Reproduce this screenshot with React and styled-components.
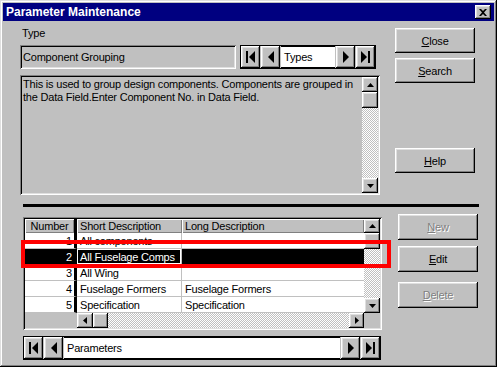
import React from 'react';
import styled, { createGlobalStyle, css } from 'styled-components';

const GlobalStyle = createGlobalStyle`
  html, body {
    margin: 0;
    padding: 0;
    background: #c0c0c0;
  }
  body {
    font-family: "Liberation Sans", Arial, sans-serif;
    font-size: 11px;
    letter-spacing: -0.2px;
    color: #000;
  }
  * {
    box-sizing: border-box;
  }
`;

const raised = css`
  box-shadow: inset -1px -1px #000, inset 1px 1px #fff, inset -2px -2px #808080,
    inset 2px 2px #dfdfdf;
`;

const sunken = css`
  box-shadow: inset 1px 1px #808080, inset -1px -1px #fff, inset 2px 2px #000,
    inset -2px -2px #dfdfdf;
`;

const dither = css`
  background-color: #c0c0c0;
  background-image: conic-gradient(#fff 25%, transparent 0 50%, #fff 0 75%, transparent 0);
  background-size: 2px 2px;
`;

const Window = styled.div`
  width: 497px;
  height: 367px;
  background: #c0c0c0;
  padding: 3px;
  display: flex;
  flex-direction: column;
  box-shadow: inset -1px -1px #000, inset 1px 1px #dfdfdf, inset -2px -2px #808080,
    inset 2px 2px #fff;
`;

const TitleBar = styled.div`
  height: 18px;
  background: #000080;
  color: #fff;
  font-weight: bold;
  font-size: 12px;
  letter-spacing: 0;
  display: flex;
  align-items: center;
  justify-content: space-between;
  padding: 0 3px 0 3px;
`;

const TitleClose = styled.div`
  width: 16px;
  height: 14px;
  background: #c0c0c0;
  ${raised};
  display: flex;
  align-items: center;
  justify-content: center;
`;

const TopSection = styled.div`
  display: flex;
  gap: 15px;
  padding-left: 17px;
`;

const LeftCol = styled.div`
  width: 360px;
  display: flex;
  flex-direction: column;
  padding-top: 6px;
`;

const Label = styled.div`
  line-height: 13px;
  height: 13px;
  padding-left: 2px;
  margin-bottom: 5px;
`;

const FieldRow = styled.div`
  display: flex;
  gap: 4px;
  height: 24px;
`;

const TypeField = styled.div`
  width: 216px;
  ${sunken};
  display: flex;
  align-items: center;
  padding: 0 3px;
`;

const NavGroup = styled.div`
  width: ${p => p.$w}px;
  height: 24px;
  display: flex;
  gap: 1px;
  padding: 1px;
  background: #c0c0c0;
  box-shadow: inset 1px 1px #000, inset -1px -1px #000;
`;

const NavButton = styled.div`
  width: 19px;
  background: #c0c0c0;
  ${raised};
  display: flex;
  align-items: center;
  justify-content: center;
`;

const NavField = styled.div`
  flex: 1;
  background: #fff;
  display: flex;
  align-items: center;
  padding: 0 3px;
  box-shadow: inset 0 1px #000, inset 0 -1px #000;
`;

const MemoBox = styled.div`
  margin-top: 6px;
  height: 120px;
  ${sunken};
  padding: 2px;
  display: flex;
`;

const MemoText = styled.div`
  flex: 1;
  padding: 1px 1px;
  line-height: 13px;
  white-space: nowrap;
  overflow: hidden;
`;

const VScroll = styled.div`
  width: 16px;
  display: flex;
  flex-direction: column;
`;

const ScrollBtn = styled.div`
  height: ${p => p.$h || 15}px;
  width: ${p => p.$w || 16}px;
  flex-shrink: 0;
  background: #c0c0c0;
  ${raised};
  display: flex;
  align-items: center;
  justify-content: center;
`;

const Track = styled.div`
  flex: 1;
  ${dither};
`;

const RightCol = styled.div`
  width: 80px;
  display: flex;
  flex-direction: column;
  padding-top: ${p => p.$top}px;
`;

const Button = styled.div`
  height: ${p => p.$h || 25}px;
  margin-top: ${p => p.$gap || 0}px;
  background: #c0c0c0;
  ${raised};
  display: flex;
  align-items: center;
  justify-content: center;
  color: ${p => (p.$disabled ? '#808080' : '#000')};
  text-shadow: ${p => (p.$disabled ? '1px 1px #fff' : 'none')};
  u {
    text-decoration: underline;
  }
`;

const Separator = styled.div`
  height: 3px;
  background: #000;
  margin: 9px 15px 0 20px;
`;

const BottomSection = styled.div`
  position: relative;
  display: flex;
  gap: 16px;
  margin-top: 7px;
  padding-left: 20px;
`;

const BottomLeft = styled.div`
  width: 359px;
  padding-top: 3px;
  display: flex;
  flex-direction: column;
`;

const Grid = styled.div`
  height: 113px;
  ${sunken};
  padding: 2px;
  display: flex;
  flex-direction: column;
`;

const GridMain = styled.div`
  display: flex;
  height: 94px;
`;

const DataArea = styled.div`
  flex: 1;
  display: flex;
  flex-direction: column;
  background: #fff;
`;

const HeaderRow = styled.div`
  height: 14px;
  display: flex;
  background: #c0c0c0;
`;

const HeaderCell = styled.div`
  width: ${p => (p.$w ? `${p.$w}px` : 'auto')};
  flex: ${p => (p.$w ? 'none' : 1)};
  display: flex;
  align-items: center;
  justify-content: ${p => (p.$center ? 'center' : 'flex-start')};
  padding-left: ${p => (p.$center ? 0 : 3)}px;
  box-shadow: inset 1px 1px #fff, inset -1px -1px #808080;
`;

const FrozenBar = styled.div`
  width: 3px;
  background: #000;
`;

const DataRow = styled.div`
  height: 16px;
  display: flex;
  background: ${p => (p.$selected ? '#000' : '#fff')};
  color: ${p => (p.$selected ? '#fff' : '#000')};
`;

const Cell = styled.div`
  width: ${p => (p.$w ? `${p.$w}px` : 'auto')};
  flex: ${p => (p.$w ? 'none' : 1)};
  display: flex;
  align-items: center;
  justify-content: ${p => (p.$right ? 'flex-end' : 'flex-start')};
  padding: ${p => (p.$right ? '0 2px 0 0' : '0 0 0 3px')};
  border-bottom: 1px solid #c0c0c0;
  border-right: ${p => p.$divider || 'none'};
  box-shadow: ${p => (p.$focus ? 'inset 0 0 0 1px #fff' : 'none')};
  white-space: nowrap;
  overflow: hidden;
`;

const GridFooter = styled.div`
  height: 15px;
  display: flex;
  background: #c0c0c0;
`;

const FrozenGap = styled.div`
  width: 52px;
`;

const HScroll = styled.div`
  flex: 1;
  display: flex;
`;

const Corner = styled.div`
  width: 16px;
`;

const BottomNav = styled(NavGroup)`
  margin-top: 6px;
`;

const Highlight = styled.div`
  position: absolute;
  left: 18px;
  top: 26px;
  width: 370px;
  height: 28px;
  border: 4px solid #ff0000;
  pointer-events: none;
`;

const Glyph = ({ type }) => {
  if (type === 'first')
    return (
      <svg width="9" height="12" viewBox="0 0 9 12">
        <rect x="0" y="0" width="2" height="12" fill="#000" />
        <polygon points="9,0 3,6 9,12" fill="#000" />
      </svg>
    );
  if (type === 'prev')
    return (
      <svg width="6" height="12" viewBox="0 0 6 12">
        <polygon points="6,0 0,6 6,12" fill="#000" />
      </svg>
    );
  if (type === 'next')
    return (
      <svg width="6" height="12" viewBox="0 0 6 12">
        <polygon points="0,0 6,6 0,12" fill="#000" />
      </svg>
    );
  if (type === 'last')
    return (
      <svg width="9" height="12" viewBox="0 0 9 12">
        <polygon points="0,0 6,6 0,12" fill="#000" />
        <rect x="7" y="0" width="2" height="12" fill="#000" />
      </svg>
    );
  if (type === 'up')
    return (
      <svg width="7" height="4" viewBox="0 0 7 4">
        <polygon points="3.5,0 7,4 0,4" fill="#000" />
      </svg>
    );
  if (type === 'down')
    return (
      <svg width="7" height="4" viewBox="0 0 7 4">
        <polygon points="0,0 7,0 3.5,4" fill="#000" />
      </svg>
    );
  if (type === 'left')
    return (
      <svg width="4" height="7" viewBox="0 0 4 7">
        <polygon points="4,0 0,3.5 4,7" fill="#000" />
      </svg>
    );
  if (type === 'right')
    return (
      <svg width="4" height="7" viewBox="0 0 4 7">
        <polygon points="0,0 4,3.5 0,7" fill="#000" />
      </svg>
    );
  return (
    <svg width="8" height="7" viewBox="0 0 8 7">
      <path d="M0 0h2l2 2 2-2h2L5 3.5 8 7H6L4 5 2 7H0l3-3.5z" fill="#000" />
    </svg>
  );
};

const rows = [
  { n: 1, short: 'All components', long: '' },
  { n: 2, short: 'All Fuselage Comps', long: '', selected: true },
  { n: 3, short: 'All Wing', long: '' },
  { n: 4, short: 'Fuselage Formers', long: 'Fuselage Formers' },
  { n: 5, short: 'Specification', long: 'Specification' },
];

const Navigator = ({ value, width, as }) => {
  const Group = as || NavGroup;
  return (
    <Group $w={width}>
      <NavButton><Glyph type="first" /></NavButton>
      <NavButton><Glyph type="prev" /></NavButton>
      <NavField>{value}</NavField>
      <NavButton><Glyph type="next" /></NavButton>
      <NavButton><Glyph type="last" /></NavButton>
    </Group>
  );
};

const App = () => (
  <>
    <GlobalStyle />
    <Window>
      <TitleBar>
        <span>Parameter Maintenance</span>
        <TitleClose><Glyph type="close" /></TitleClose>
      </TitleBar>

      <TopSection>
        <LeftCol>
          <Label>Type</Label>
          <FieldRow>
            <TypeField>Component Grouping</TypeField>
            <Navigator value="Types" width={136} />
          </FieldRow>
          <MemoBox>
            <MemoText>
              This is used to group design components. Components are grouped in
              <br />
              the Data Field.Enter Component No. in Data Field.
            </MemoText>
            <VScroll>
              <ScrollBtn><Glyph type="up" /></ScrollBtn>
              <ScrollBtn $h={16} />
              <Track />
              <ScrollBtn><Glyph type="down" /></ScrollBtn>
            </VScroll>
          </MemoBox>
        </LeftCol>
        <RightCol $top={7}>
          <Button><span><u>C</u>lose</span></Button>
          <Button $gap={5}><span><u>S</u>earch</span></Button>
          <Button $gap={65}><span><u>H</u>elp</span></Button>
        </RightCol>
      </TopSection>

      <Separator />

      <BottomSection>
        <BottomLeft>
          <Grid>
            <GridMain>
              <DataArea>
                <HeaderRow>
                  <HeaderCell $w={49} $center>Number</HeaderCell>
                  <FrozenBar />
                  <HeaderCell $w={105}>Short Description</HeaderCell>
                  <HeaderCell>Long Description</HeaderCell>
                </HeaderRow>
                {rows.map(r => (
                  <DataRow key={r.n} $selected={r.selected}>
                    <Cell $w={52} $right $divider="3px solid #000">{r.n}</Cell>
                    <Cell $w={105} $divider="1px solid #c0c0c0" $focus={r.selected}>
                      {r.short}
                    </Cell>
                    <Cell>{r.long}</Cell>
                  </DataRow>
                ))}
              </DataArea>
              <VScroll>
                <ScrollBtn $h={14}><Glyph type="up" /></ScrollBtn>
                <ScrollBtn $h={16} />
                <Track />
                <ScrollBtn><Glyph type="down" /></ScrollBtn>
              </VScroll>
            </GridMain>
            <GridFooter>
              <FrozenGap />
              <HScroll>
                <ScrollBtn $h={15} $w={16}><Glyph type="left" /></ScrollBtn>
                <ScrollBtn $h={15} $w={15} />
                <Track />
                <ScrollBtn $h={15} $w={15}><Glyph type="right" /></ScrollBtn>
              </HScroll>
              <Corner />
            </GridFooter>
          </Grid>
          <Navigator value="Parameters" width={358} as={BottomNav} />
        </BottomLeft>
        <RightCol $top={0}>
          <Button $h={26} $disabled><span><u>N</u>ew</span></Button>
          <Button $h={26} $gap={6}><span><u>E</u>dit</span></Button>
          <Button $h={26} $gap={10} $disabled><span><u>D</u>elete</span></Button>
        </RightCol>
        <Highlight />
      </BottomSection>
    </Window>
  </>
);

export default App;
